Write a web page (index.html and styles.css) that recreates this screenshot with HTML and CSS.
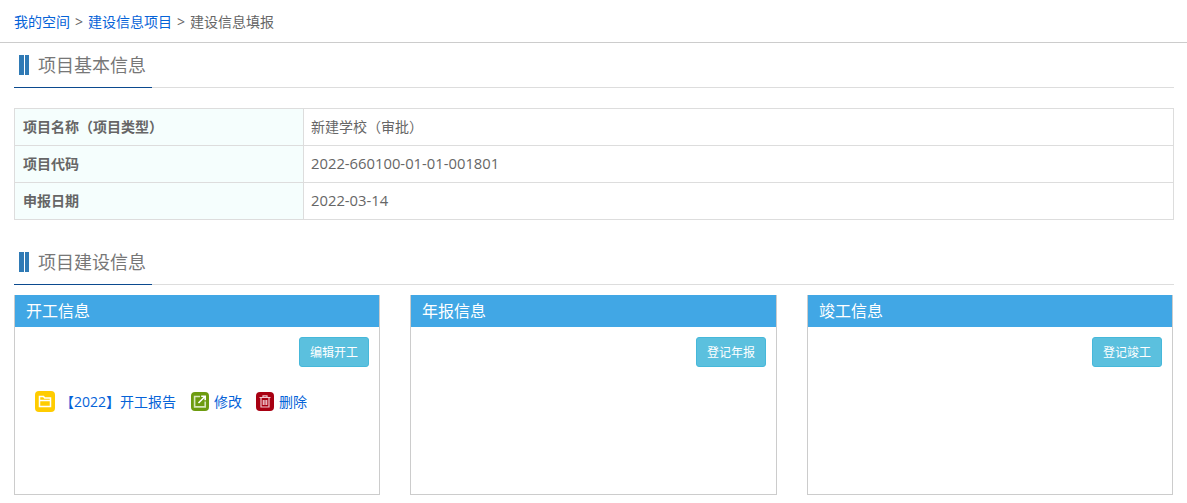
FILE: index.html
```html
<!DOCTYPE html>
<html lang="zh-CN">
<head>
<meta charset="utf-8">
<title>建设信息填报</title>
<link rel="stylesheet" href="styles.css">
</head>
<body>
<nav class="crumbs"><a href="#">我的空间</a><span class="sep">&gt;</span><a href="#">建设信息项目</a><span class="sep">&gt;</span><span>建设信息填报</span></nav>
<main class="content">
  <header class="sec-title"><div class="sec-name"><i class="bars"><b></b><b></b></i><h2>项目基本信息</h2></div></header>
  <table class="info">
    <tr><th>项目名称（项目类型）</th><td>新建学校（审批）</td></tr>
    <tr><th>项目代码</th><td class="num">2022-660100-01-01-001801</td></tr>
    <tr><th>申报日期</th><td class="num">2022-03-14</td></tr>
  </table>
  <header class="sec-title second"><div class="sec-name"><i class="bars"><b></b><b></b></i><h2>项目建设信息</h2></div></header>
  <div class="panels">
    <section class="panel">
      <h3>开工信息</h3>
      <div class="tools"><button>编辑开工</button></div>
      <div class="entry">
        <span class="ico yellow"><svg viewBox="0 0 20 21" width="20" height="21"><path d="M4.5 5.5h4l1.2 1.5h5.8v8.5h-11z M4.5 9.5h11" fill="none" stroke="#fff" stroke-width="1.5"/></svg></span>
        <a class="report" href="#">【2022】开工报告</a>
        <span class="ico small green"><svg viewBox="0 0 18 19" width="18" height="19"><path d="M9 4.5H3.6v10.4h10.6V9.5" fill="none" stroke="#d8e6bd" stroke-width="1.6"/><path d="M7.5 11 13.7 4.8M10.2 4.2h4v4" fill="none" stroke="#fff" stroke-width="1.6"/></svg></span>
        <a class="act" href="#">修改</a>
        <span class="ico small red"><svg viewBox="0 0 18 19" width="18" height="19"><path d="M3.5 5.5h11M7 5.5V3.8h4v1.7M5 6v9h8V6M7.3 8v5M9 8v5M10.7 8v5" fill="none" stroke="#f0c8d0" stroke-width="1.2"/></svg></span>
        <a class="act" href="#">删除</a>
      </div>
    </section>
    <section class="panel">
      <h3>年报信息</h3>
      <div class="tools"><button>登记年报</button></div>
    </section>
    <section class="panel">
      <h3>竣工信息</h3>
      <div class="tools"><button>登记竣工</button></div>
    </section>
  </div>
</main>
</body>
</html>
```
FILE: styles.css
```css
* { box-sizing: border-box; }
html, body { margin: 0; padding: 0; background: #fff; }
body {
  font-family: "Open Sans", "Noto Sans CJK SC", sans-serif;
  font-size: 14px;
  color: #666;
  overflow: hidden;
}
a { color: #0663d8; text-decoration: none; }
.crumbs {
  height: 43px;
  border-bottom: 1px solid #ccc;
  padding-left: 14px;
  display: flex;
  align-items: center;
  font-size: 14px;
  color: #666;
}
.sep { margin: 0 5px; }
.content { width: 1160px; margin-left: 14px; }
.sec-title {
  height: 45px;
  border-bottom: 1px solid #ddd;
  display: flex;
}
.sec-title.second { margin-top: 20px; }
.sec-name {
  width: 138px;
  height: 45px;
  border-bottom: 1px solid #0b4a8f;
  display: flex;
  align-items: center;
  padding-left: 5px;
}
.bars { display: flex; gap: 1px; margin-right: 9px; }
.bars b { display: block; width: 4.5px; height: 20px; background: #2f7ab5; }
.sec-name h2 { margin: 0; font-size: 18px; font-weight: 400; color: #777; line-height: 1; }
.info {
  margin-top: 20px;
  width: 1160px;
  border-collapse: collapse;
  table-layout: fixed;
  font-size: 14px;
}
.info th, .info td {
  border: 1px solid #ddd;
  height: 37px;
  padding: 0 8px 2px;
  text-align: left;
  color: #666;
}
.info th { width: 289px; background: #f5fefd; font-weight: 700; }
.info td { padding-left: 7px; }
.info td.num { font-size: 14.8px; }
.panels {
  margin-top: 10px;
  display: grid;
  grid-template-columns: 366px 367px 366px;
  gap: 30px;
}
.panel {
  height: 200px;
  border: 1px solid #ccc;
  border-top: 0;
}
.panel h3 {
  margin: 0;
  height: 32px;
  line-height: 32px;
  background: #41a7e5;
  color: #fff;
  font-size: 16px;
  font-weight: 400;
  padding-left: 11px;
}
.tools { display: flex; justify-content: flex-end; padding: 10px 10px 0 0; }
.tools button {
  width: 70px;
  height: 30px;
  padding: 0;
  background: #5bc0de;
  border: 1px solid #46b8da;
  border-radius: 3px;
  color: #fff;
  font-family: inherit;
  font-size: 12px;
}
.entry {
  margin: 24px 0 0 20px;
  display: flex;
  align-items: center;
  font-size: 14px;
  line-height: 21px;
}
.ico {
  flex: none;
  display: flex;
  width: 20px;
  height: 21px;
  border-radius: 4px;
  align-items: center;
  justify-content: center;
}
.ico.small { width: 18px; height: 19px; }
.yellow { background: #ffcc00; }
.green { background: #6d9b0f; }
.red { background: #a80012; }
.report { margin-left: 5px; margin-right: 15px; }
.act { margin-left: 5px; margin-right: 14px; }
```
